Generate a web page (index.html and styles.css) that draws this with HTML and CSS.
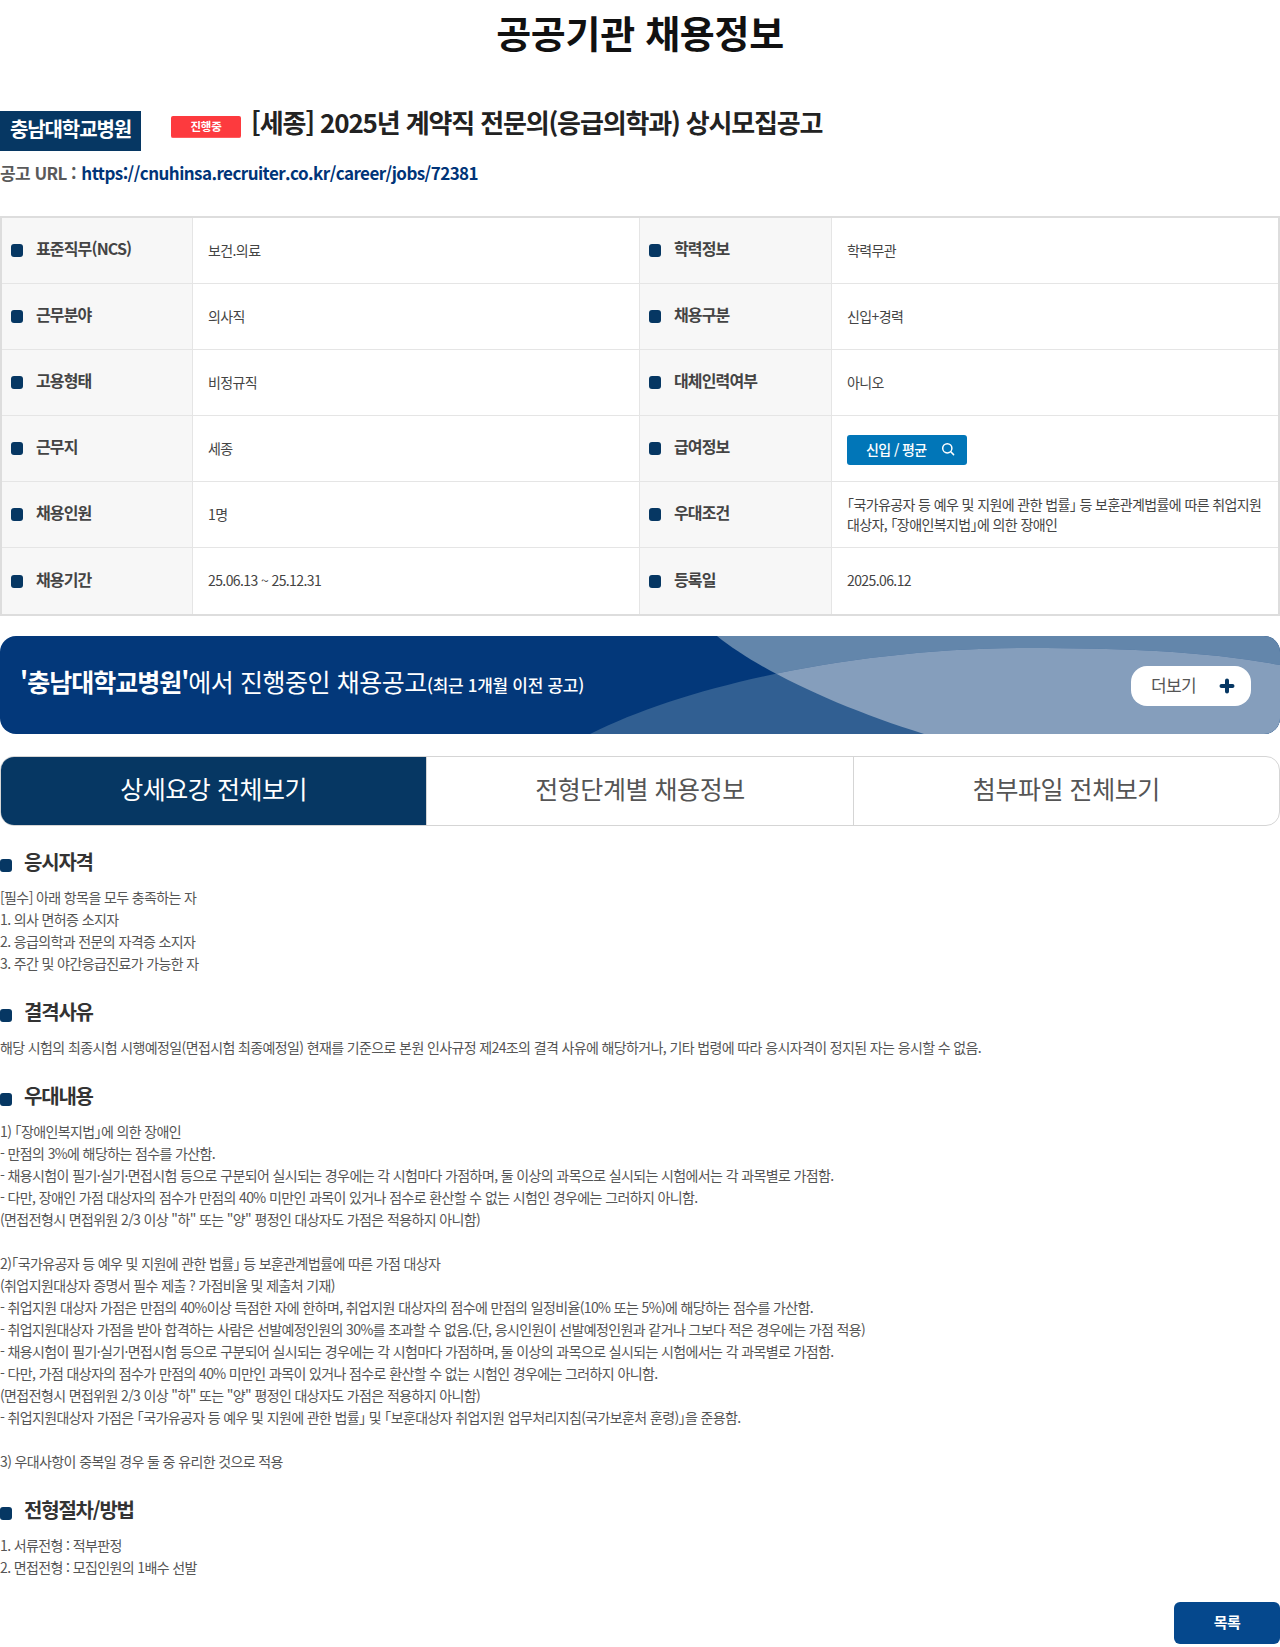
FILE: index.html
```html
<!DOCTYPE html>
<html lang="ko">
<head>
<meta charset="utf-8">
<title>공공기관 채용정보</title>
<link rel="stylesheet" href="styles.css">
</head>
<body>
<h1 class="page-title">공공기관 채용정보</h1>
<div class="job-head">
  <span class="org">충남대학교병원</span>
  <span class="status">진행중</span>
  <h2 class="job-title">[세종] 2025년 계약직 전문의(응급의학과) 상시모집공고</h2>
</div>
<p class="job-url">공고 URL : <a href="#">https://cnuhinsa.recruiter.co.kr/career/jobs/72381</a></p>
<table class="info">
  <colgroup><col class="c-th"><col class="c-td"><col class="c-th2"><col class="c-td2"></colgroup>
  <tbody>
  <tr><th><span class="dot"></span>표준직무(NCS)</th><td>보건.의료</td><th><span class="dot"></span>학력정보</th><td>학력무관</td></tr>
  <tr><th><span class="dot"></span>근무분야</th><td>의사직</td><th><span class="dot"></span>채용구분</th><td>신입+경력</td></tr>
  <tr><th><span class="dot"></span>고용형태</th><td>비정규직</td><th><span class="dot"></span>대체인력여부</th><td>아니오</td></tr>
  <tr><th><span class="dot"></span>근무지</th><td>세종</td><th><span class="dot"></span>급여정보</th><td><a class="pay" href="#">신입 / 평균<svg width="14" height="14" viewBox="0 0 14 14" fill="none" stroke="#fff" stroke-width="1.5" stroke-linecap="round"><circle cx="6.3" cy="6.3" r="4.6"/><path d="M9.8 9.8 12.6 12.6"/></svg></a></td></tr>
  <tr><th><span class="dot"></span>채용인원</th><td>1명</td><th><span class="dot"></span>우대조건</th><td>｢국가유공자 등 예우 및 지원에 관한 법률｣ 등 보훈관계법률에 따른 취업지원 대상자, ｢장애인복지법｣에 의한 장애인</td></tr>
  <tr><th><span class="dot"></span>채용기간</th><td>25.06.13 ~ 25.12.31</td><th><span class="dot"></span>등록일</th><td>2025.06.12</td></tr>
  </tbody>
</table>
<div class="banner">
  <svg class="banner-bg" viewBox="0 0 1280 98" preserveAspectRatio="none">
    <defs><clipPath id="lens"><path d="M717 0H1280V98H924C840 72 760 35 717 0Z"/></clipPath></defs>
    <path fill="#6386ab" d="M717 0H1280V98H924C840 72 760 35 717 0Z"/>
    <path fill="#315f92" d="M590 98C690 48 860 12 1028 12C1130 12 1210 16 1280 29V98Z"/>
    <path fill="#859ebc" clip-path="url(#lens)" d="M590 98C690 48 860 12 1028 12C1130 12 1210 16 1280 29V98Z"/>
  </svg>
  <p class="banner-text"><strong>'충남대학교병원'</strong>에서 진행중인 채용공고<small>(최근 1개월 이전 공고)</small></p>
  <a class="more" href="#">더보기<svg width="16" height="16" viewBox="0 0 16 16" stroke="#063763" stroke-width="4" stroke-linecap="round"><path d="M8 2.5V13.5M2.5 8H13.5"/></svg></a>
</div>
<div class="tabs">
  <a class="tab active" href="#">상세요강 전체보기</a>
  <a class="tab" href="#">전형단계별 채용정보</a>
  <a class="tab" href="#">첨부파일 전체보기</a>
</div>
<section class="sec">
  <h3><span class="dot"></span>응시자격</h3>
  <p>[필수] 아래 항목을 모두 충족하는 자<br>1. 의사 면허증 소지자<br>2. 응급의학과 전문의 자격증 소지자<br>3. 주간 및 야간응급진료가 가능한 자</p>
</section>
<section class="sec">
  <h3><span class="dot"></span>결격사유</h3>
  <p>해당 시험의 최종시험 시행예정일(면접시험 최종예정일) 현재를 기준으로 본원 인사규정 제24조의 결격 사유에 해당하거나, 기타 법령에 따라 응시자격이 정지된 자는 응시할 수 없음.</p>
</section>
<section class="sec">
  <h3><span class="dot"></span>우대내용</h3>
  <p>1) ｢장애인복지법｣에 의한 장애인<br>- 만점의 3%에 해당하는 점수를 가산함.<br>- 채용시험이 필기·실기·면접시험 등으로 구분되어 실시되는 경우에는 각 시험마다 가점하며, 둘 이상의 과목으로 실시되는 시험에서는 각 과목별로 가점함.<br>- 다만, 장애인 가점 대상자의 점수가 만점의 40% 미만인 과목이 있거나 점수로 환산할 수 없는 시험인 경우에는 그러하지 아니함.<br>(면접전형시 면접위원 2/3 이상 "하" 또는 "양" 평정인 대상자도 가점은 적용하지 아니함)<br><br>2)｢국가유공자 등 예우 및 지원에 관한 법률｣ 등 보훈관계법률에 따른 가점 대상자<br>(취업지원대상자 증명서 필수 제출 ? 가점비율 및 제출처 기재)<br>- 취업지원 대상자 가점은 만점의 40%이상 득점한 자에 한하며, 취업지원 대상자의 점수에 만점의 일정비율(10% 또는 5%)에 해당하는 점수를 가산함.<br>- 취업지원대상자 가점을 받아 합격하는 사람은 선발예정인원의 30%를 초과할 수 없음.(단, 응시인원이 선발예정인원과 같거나 그보다 적은 경우에는 가점 적용)<br>- 채용시험이 필기·실기·면접시험 등으로 구분되어 실시되는 경우에는 각 시험마다 가점하며, 둘 이상의 과목으로 실시되는 시험에서는 각 과목별로 가점함.<br>- 다만, 가점 대상자의 점수가 만점의 40% 미만인 과목이 있거나 점수로 환산할 수 없는 시험인 경우에는 그러하지 아니함.<br>(면접전형시 면접위원 2/3 이상 "하" 또는 "양" 평정인 대상자도 가점은 적용하지 아니함)<br>- 취업지원대상자 가점은 ｢국가유공자 등 예우 및 지원에 관한 법률｣ 및 ｢보훈대상자 취업지원 업무처리지침(국가보훈처 훈령)｣을 준용함.<br><br>3) 우대사항이 중복일 경우 둘 중 유리한 것으로 적용</p>
</section>
<section class="sec">
  <h3><span class="dot"></span>전형절차/방법</h3>
  <p>1. 서류전형 : 적부판정<br>2. 면접전형 : 모집인원의 1배수 선발</p>
</section>
<div class="actions"><a class="list-btn" href="#">목록</a></div>
</body>
</html>
```
FILE: styles.css
```css
* { box-sizing: border-box; }
html, body { margin: 0; padding: 0; }
body { width: 1280px; height: 1647px; overflow: hidden; background: #fff; color: #444; font-family: "Noto Sans CJK KR", "Noto Sans", sans-serif; font-size: 14px; letter-spacing: -0.62px; }
a { color: inherit; text-decoration: none; }
.page-title { margin: 0; padding-top: 4px; height: 111px; text-align: center; font-size: 38px; line-height: 56px; font-weight: 700; color: #111; letter-spacing: -0.3px; }
.job-head { display: flex; align-items: flex-start; height: 40px; }
.org { width: 141px; height: 40px; background: #063763; color: #fff; font-size: 20px; font-weight: 700; line-height: 36px; text-align: center; letter-spacing: -1.1px; }
.status { margin: 5px 0 0 30px; width: 70px; height: 22px; border-radius: 2px; background: #fd3a3e; border-bottom: 1px solid #ff5c5f; color: #fff; font-size: 11.5px; line-height: 21px; text-align: center; font-weight: 700; letter-spacing: -0.2px; }
.job-title { margin: -7px 0 0 10px; font-size: 26px; line-height: 36px; font-weight: 700; color: #222; letter-spacing: -1.15px; }
.job-url { margin: 8px 0 0; height: 57px; font-size: 17px; line-height: 28px; font-weight: 700; color: #5a5a5a; letter-spacing: -0.55px; }
.job-url a { margin-left: 1px; color: #003478; }
.info { width: 1280px; height: 400px; table-layout: fixed; border-collapse: separate; border-spacing: 0; border: 2px solid #ddd; }
.c-th { width: 191px; }
.c-td { width: 447px; }
.c-th2 { width: 192px; }
.c-td2 { width: 446px; }
.info th, .info td { height: 66px; border-right: 1px solid #e5e5e5; border-bottom: 1px solid #e5e5e5; font-size: 14px; line-height: 20px; vertical-align: middle; text-align: left; }
.info tr:last-child th, .info tr:last-child td { border-bottom: 0; }
.info tr > :last-child { border-right: 0; }
.info th { background: #f7f7f7; padding: 0 0 5px 9px; font-size: 16px; font-weight: 700; color: #444; letter-spacing: -0.85px; }
.info td { padding: 0 15px 2px; color: #444; letter-spacing: -0.6px; }
.info th .dot { margin-right: 13px; vertical-align: -2px; }
.dot { display: inline-block; flex: none; width: 12px; height: 13px; border-radius: 3px; background: #063763; }
.pay { display: inline-flex; align-items: center; gap: 14px; height: 30px; width: 120px; margin-top: 4px; padding: 0 0 1px 19px; border-radius: 3px; background: #0176b8; color: #fff; font-weight: 500; vertical-align: middle; }
.banner { position: relative; overflow: hidden; display: flex; align-items: center; justify-content: space-between; height: 98px; margin-top: 20px; padding: 0 29px 0 20px; border-radius: 16px; background: #03387a; }
.banner-bg { position: absolute; left: 0; top: 0; width: 100%; height: 100%; }
.banner-text { position: relative; margin: 0 0 4px; color: #fff; font-size: 25px; line-height: 36px; letter-spacing: -0.45px; }
.banner-text strong { font-weight: 700; letter-spacing: -1px; }
.banner-text small { font-size: 17px; font-weight: 500; letter-spacing: -0.3px; }
.more { position: relative; display: flex; align-items: center; justify-content: space-between; width: 120px; height: 40px; margin-top: 2px; padding: 0 16px 4px 20px; border-radius: 16px; background: #fff; color: #555; font-size: 17px; }
.more svg { margin-top: 3px; }
.tabs { display: flex; height: 70px; margin-top: 22px; border: 1px solid #d5d5d5; border-radius: 14px; overflow: hidden; }
.tab { flex: 1; display: flex; align-items: center; justify-content: center; padding-bottom: 6px; border-left: 1px solid #d5d5d5; font-size: 25px; color: #555; letter-spacing: -0.45px; }
.tab.active { border: 0; background: #063763; color: #fff; }
.sec h3 { position: relative; top: -1px; margin: 0; display: flex; align-items: center; gap: 12px; font-size: 20px; line-height: 30px; font-weight: 700; color: #333; letter-spacing: -1.2px; }
.sec h3 .dot { margin-top: 6px; }
.sec p { margin: 8px 0 0; line-height: 22px; color: #555; }
.sec { margin-bottom: 24px; }
.tabs + .sec { margin-top: 22px; }
.actions { display: flex; justify-content: flex-end; margin-top: 3px; }
.list-btn { display: flex; align-items: center; justify-content: center; width: 106px; height: 42px; padding-bottom: 4px; border-radius: 6px; background: #05488d; color: #fff; font-weight: 700; font-size: 15px; }
```
